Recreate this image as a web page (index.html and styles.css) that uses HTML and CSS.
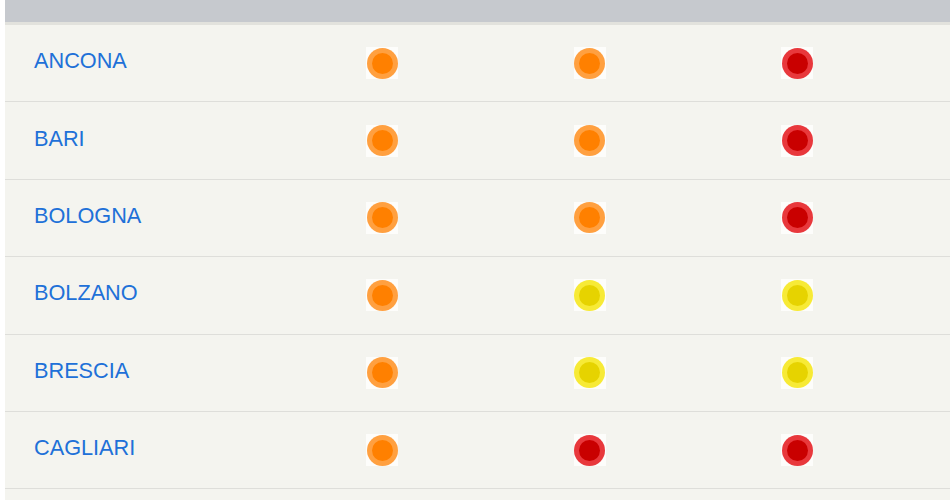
FILE: index.html
```html
<!DOCTYPE html>
<html>
<head>
<meta charset="utf-8">
<link rel="stylesheet" href="styles.css">
</head>
<body>
<div class="table">
  <div class="head"></div>
  <div class="row"><a class="city">ANCONA</a><span class="cell"><i class="dot orange"></i></span><span class="cell"><i class="dot orange"></i></span><span class="cell"><i class="dot red"></i></span></div>
  <div class="row"><a class="city">BARI</a><span class="cell"><i class="dot orange"></i></span><span class="cell"><i class="dot orange"></i></span><span class="cell"><i class="dot red"></i></span></div>
  <div class="row"><a class="city">BOLOGNA</a><span class="cell"><i class="dot orange"></i></span><span class="cell"><i class="dot orange"></i></span><span class="cell"><i class="dot red"></i></span></div>
  <div class="row"><a class="city">BOLZANO</a><span class="cell"><i class="dot orange"></i></span><span class="cell"><i class="dot yellow"></i></span><span class="cell"><i class="dot yellow"></i></span></div>
  <div class="row"><a class="city">BRESCIA</a><span class="cell"><i class="dot orange"></i></span><span class="cell"><i class="dot yellow"></i></span><span class="cell"><i class="dot yellow"></i></span></div>
  <div class="row"><a class="city">CAGLIARI</a><span class="cell"><i class="dot orange"></i></span><span class="cell"><i class="dot red"></i></span><span class="cell"><i class="dot red"></i></span></div>
  <div class="row"></div>
</div>
</body>
</html>
```
FILE: styles.css
```css
html, body {
  margin: 0;
  padding: 0;
  background: #ffffff;
  font-family: "Liberation Sans", Arial, sans-serif;
}
.table {
  margin-left: 5px;
  background: #f4f4ef;
  height: 500px;
  overflow: hidden;
}
.head {
  height: 22px;
  background: #c6c9ce;
  border-bottom: 3px solid #e2e2dd;
}
.row {
  height: 77.4px;
  box-sizing: border-box;
  border-bottom: 1.5px solid #dededa;
  display: grid;
  grid-template-columns: 273.5px 207.5px 207.5px 207.5px 1fr;
  align-items: center;
}
.city {
  padding-left: 29px;
  font-size: 21.7px;
  color: #2070d8;
  margin-top: -4px;
}
.cell {
  display: flex;
  justify-content: center;
}
.dot {
  width: 32px;
  height: 32px;
  background: #fdfdfb;
  display: flex;
  align-items: center;
  justify-content: center;
  position: relative;
}
.dot::before {
  content: "";
  position: absolute;
  left: 0.5px;
  top: 0.5px;
  width: 31px;
  height: 31px;
  border-radius: 50%;
}
.dot::after {
  content: "";
  width: 21px;
  height: 21px;
  border-radius: 50%;
  position: relative;
}
.orange::before { background: #ffa040; }
.orange::after { background: #ff8000; }
.yellow::before { background: #f7ea36; }
.yellow::after { background: #e6d300; }
.red::before { background: #e8383c; }
.red::after { background: #c90000; }
```
